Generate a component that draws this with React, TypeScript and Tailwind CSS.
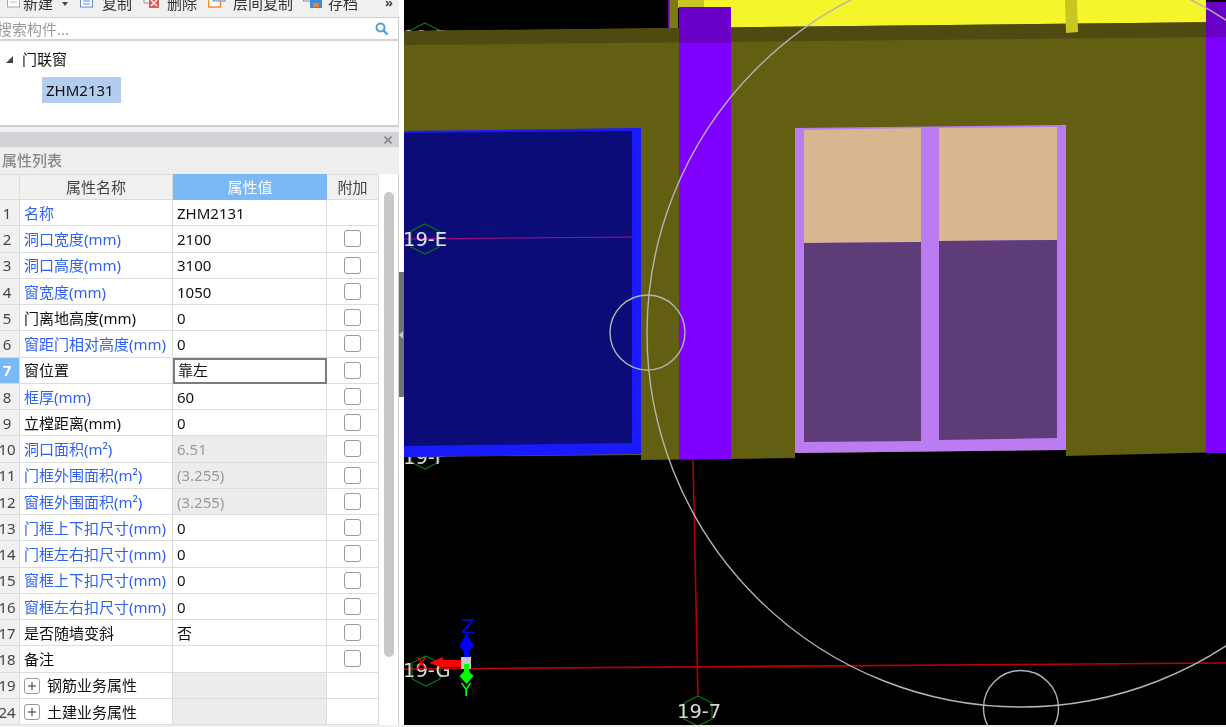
import React from "react";

const cjk = { fontFamily: '"Noto Sans", "Noto Sans CJK SC", sans-serif' };

const rows = [
    { no: 1, name: "名称", value: "ZHM2131", blue: true, noCheck: true },
    { no: 2, name: "洞口宽度(mm)", value: "2100", blue: true },
    { no: 3, name: "洞口高度(mm)", value: "3100", blue: true },
    { no: 4, name: "窗宽度(mm)", value: "1050", blue: true },
    { no: 5, name: "门离地高度(mm)", value: "0" },
    { no: 6, name: "窗距门相对高度(mm)", value: "0", blue: true },
    { no: 7, name: "窗位置", value: "靠左", active: true },
    { no: 8, name: "框厚(mm)", value: "60", blue: true },
    { no: 9, name: "立樘距离(mm)", value: "0" },
    { no: 10, name: "洞口面积(m²)", value: "6.51", blue: true, grey: true },
    { no: 11, name: "门框外围面积(m²)", value: "(3.255)", blue: true, grey: true },
    { no: 12, name: "窗框外围面积(m²)", value: "(3.255)", blue: true, grey: true },
    { no: 13, name: "门框上下扣尺寸(mm)", value: "0", blue: true },
    { no: 14, name: "门框左右扣尺寸(mm)", value: "0", blue: true },
    { no: 15, name: "窗框上下扣尺寸(mm)", value: "0", blue: true },
    { no: 16, name: "窗框左右扣尺寸(mm)", value: "0", blue: true },
    { no: 17, name: "是否随墙变斜", value: "否" },
    { no: 18, name: "备注", value: "" },
    { no: 19, name: "钢筋业务属性", value: "", group: true },
    { no: 24, name: "土建业务属性", value: "", group: true },
];

const Toolbar = () => (
    <div className="h-[18px] shrink-0 bg-[#f0f0f0] border-b border-[#cfcfcf] overflow-hidden relative text-[15px] leading-[20px] text-[#333]">
        <div className="flex items-start -mt-[7px]">
            <svg width="14" height="20" className="ml-[7px] -mt-[1px]"><rect x="0.5" y="0" width="12" height="15" fill="#fff" stroke="#aaa" /><path d="M3 7h7M3 10h7" stroke="#bbb" /></svg>
            <span className="ml-[2px]">新建</span>
            <svg width="6" height="4" className="ml-[9px] mt-[9px]"><path d="M0 0h6L3 4z" fill="#444" /></svg>
            <svg width="15" height="20" className="ml-[11px] -mt-[1px]"><rect x="1.5" y="0" width="12" height="15" fill="#fff" stroke="#5a8fc8" /><path d="M4 6h7M4 9h7M4 12h7" stroke="#5a8fc8" /></svg>
            <span className="ml-[8px]">复制</span>
            <svg width="18" height="20" className="ml-[11px] -mt-[1px]"><path d="M1 0v11h7" fill="none" stroke="#999" /><rect x="6" y="6" width="10" height="10" fill="#e05a50" /><path d="M8 8l6 6M14 8l-6 6" stroke="#fff" strokeWidth="1.4" /></svg>
            <span className="ml-[6px]">删除</span>
            <svg width="18" height="20" className="ml-[11px] -mt-[1px]"><rect x="0.5" y="3" width="12" height="12" fill="#fff" stroke="#ef8a30" strokeWidth="1.5" /><rect x="5" y="0" width="12" height="9" fill="#d8e8f8" stroke="#5a8fc8" /></svg>
            <span className="ml-[7px]">层间复制</span>
            <svg width="20" height="20" className="ml-[10px] -mt-[1px]"><rect x="0.5" y="2" width="9" height="7" fill="#fff" stroke="#888" /><rect x="7" y="4" width="12" height="12" fill="#3f8ad8" /><rect x="10" y="4" width="6" height="4" fill="#fff" /><rect x="10" y="11" width="6" height="4" fill="#f08030" /></svg>
            <span className="ml-[5px]">存档</span>
        </div>
        <span className="absolute left-[385px] top-[-8px] text-[13px] font-bold text-[#444]">»</span>
    </div>
);

const SearchBar = () => (
    <div className="h-[23px] shrink-0 bg-white border-b-2 border-[#d4d4d4] border-r border-r-[#cfcfcf] flex items-center justify-between pr-[9px] overflow-hidden">
        <span className="-ml-[3px] pt-[1px] text-[15px] text-[#9a9a9a]">搜索构件...</span>
        <svg width="14" height="14" viewBox="0 0 14 14">
            <circle cx="5.5" cy="5.5" r="4" fill="none" stroke="#4c9fd4" strokeWidth="2" />
            <path d="M8.5 8.5l4 4" stroke="#4c9fd4" strokeWidth="2.4" />
        </svg>
    </div>
);

const Tree = () => (
    <div className="h-[86px] shrink-0 bg-white border-b-2 border-[#cfcfcf] border-r border-r-[#cfcfcf] text-[15px] text-[#111]">
        <div className="flex items-center h-[24px] mt-[6px] pl-[6px]">
            <svg width="7" height="7"><path d="M7 0v7H0z" fill="#444" /></svg>
            <span className="ml-[9px]">门联窗</span>
        </div>
        <div className="ml-[42px] mt-[6px] w-[79px] h-[26px] bg-[#b3cdee] flex items-center pl-[4px]">ZHM2131</div>
    </div>
);

const Checkbox = () => <div className="w-[17px] h-[17px] rounded-[3px] border border-[#9a9a9a] bg-white" />;

const PlusBox = () => (
    <div className="w-[16px] h-[16px] rounded-[3px] border border-[#9a9a9a] bg-white flex items-center justify-center shrink-0">
        <svg width="8" height="8"><path d="M4 0v8M0 4h8" stroke="#333" /></svg>
    </div>
);

const PropertyTable = () => (
    <div className="flex-1 flex bg-white border-r border-[#cfcfcf] min-h-0 relative text-[15px]">
        <div className="w-[379px] shrink-0 grid grid-cols-[20px_153px_154px_52px] auto-rows-[26.25px] grid-rows-[26px]">
            <div className="bg-[#f0f0f0] border-r border-b border-t border-[#dcdcdc]" />
            <div className="bg-[#f0f0f0] border-r border-b border-t border-[#dcdcdc] flex items-center justify-center text-[#444]">属性名称</div>
            <div className="bg-[#7ab8f6] text-white flex items-center justify-center">属性值</div>
            <div className="bg-[#f0f0f0] border-b border-t border-r border-[#dcdcdc] flex items-center justify-center text-[#444]">附加</div>
            {rows.map((row) => (
                <React.Fragment key={row.no}>
                    <div className={`flex items-center justify-center pt-[1px] pr-[5px] border-r border-b border-[#dcdcdc] ${row.active ? "bg-[#7ab8f6] text-white font-bold" : "bg-[#f0f0f0] text-[#444]"}`}>
                        {row.no}
                    </div>
                    <div className={`flex items-center pt-[1px] pl-[4px] border-r border-b border-[#dcdcdc] whitespace-nowrap ${row.blue ? "text-[#2f62f0]" : "text-[#111]"}`}>
                        {row.group && <PlusBox />}
                        <span className={row.group ? "ml-[7px]" : ""}>{row.name}</span>
                    </div>
                    {row.active ? (
                        <div className="flex items-center pl-[3px] border-2 border-[#7c7c7c] text-[#111]">{row.value}</div>
                    ) : (
                        <div className={`flex items-center pt-[1px] pl-[4px] border-r border-b border-[#dcdcdc] ${row.grey || row.group ? "bg-[#ececec] text-[#9a9a9a]" : "text-[#111]"}`}>
                            {row.value}
                        </div>
                    )}
                    <div className="flex items-center justify-center border-r border-b border-[#dcdcdc]">
                        {!row.noCheck && !row.group && <Checkbox />}
                    </div>
                </React.Fragment>
            ))}
        </div>
        <div className="absolute left-[384px] top-[18px] w-[10px] h-[465px] rounded-full bg-[#c8c8c8]" />
    </div>
);

const Hex = ({ cx, cy }: { cx: number; cy: number }) => (
    <polygon
        points={`${cx},${cy - 15} ${cx + 14},${cy - 8} ${cx + 14},${cy + 8} ${cx},${cy + 15} ${cx - 14},${cy + 8} ${cx - 14},${cy - 8}`}
        fill="none"
        stroke="#0a7a0a"
        strokeWidth="1.2"
    />
);

const labelFont = '"DejaVu Sans", sans-serif';

const Scene = () => (
    <svg viewBox="404 0 822 725" width="822" height="725" className="block">
        <rect x="404" y="0" width="822" height="725" fill="#000" />

        <Hex cx={425} cy={38} />
        <text x="403" y="44" fill="#d8d8d8" fontSize="19.5" fontFamily={labelFont}>19-D</text>
        <Hex cx={425} cy={454} />
        <text x="403" y="464" fill="#d8d8d8" fontSize="19.5" fontFamily={labelFont}>19-F</text>

        {/* upper floor */}
        <polygon points="704,0 1206,0 1206,24 704,29" fill="#f5f52c" />
        <polygon points="678,0 704,0 704,8 678,8" fill="#c8c622" />
        <rect x="668" y="0" width="10" height="30" fill="#7c7a12" />
        <rect x="668" y="0" width="1.5" height="29" fill="#7000c0" />

        {/* wall */}
        <polygon points="404,31 1226,22 1226,452 1066,456 1066,450 795,453 795,458 641,460 641,455 404,457" fill="#625e12" />
        <polygon points="404,31 1226,22 1226,37 404,45" fill="#4f4a10" />
        <polygon points="1065,0 1077,0 1078,32 1066,33" fill="#c8c622" />

        {/* door */}
        <polygon points="404,131 641,128 641,454 404,457" fill="#1a1aff" />
        <polygon points="404,133 632,131 632,443 404,446" fill="#0c0c78" />

        {/* window */}
        <polygon points="795,128 1066,125 1066,450 795,453" fill="#bb7cf2" />
        <polygon points="804,130 921,128 921,242 804,243" fill="#d8b690" />
        <polygon points="939,128 1057,127 1057,240 939,241" fill="#d8b690" />
        <polygon points="804,243 921,242 921,441 804,442" fill="#5e3c78" />
        <polygon points="939,241 1057,240 1057,438 939,440" fill="#5e3c78" />

        {/* columns */}
        <rect x="679" y="7" width="52" height="452" fill="#8000ff" />
        <polygon points="679,7 730,7 731,43 679,43" fill="#6a00c8" />
        <rect x="1206" y="2" width="20" height="451" fill="#8000ff" />
        <polygon points="1206,2 1226,2 1226,37 1206,38" fill="#6a00c8" />

        {/* grid lines */}
        <line x1="404" y1="239" x2="632" y2="237" stroke="#a0108a" />
        <line x1="693" y1="460" x2="698" y2="697" stroke="#b00000" strokeWidth="1.6" />
        <line x1="404" y1="669" x2="1226" y2="663" stroke="#c00000" strokeWidth="1.6" />

        <Hex cx={425} cy={239} />
        <text x="403" y="246" fill="#e4e4e4" fontSize="19.5" fontFamily={labelFont}>19-E</text>
        <Hex cx={426} cy={671} />
        <text x="403" y="677" fill="#d8d8d8" fontSize="19.5" fontFamily={labelFont}>19-G</text>
        <Hex cx={698} cy={711} />
        <text x="677" y="718" fill="#d8d8d8" fontSize="19.5" fontFamily={labelFont}>19-7</text>

        {/* snap circles */}
        <circle cx="1021" cy="333" r="374" fill="none" stroke="#b4b4b4" strokeWidth="1.4" />
        <circle cx="647.5" cy="332.5" r="37.5" fill="none" stroke="#b4b4b4" strokeWidth="1.4" />
        <circle cx="1021" cy="708" r="37.5" fill="none" stroke="#b4b4b4" strokeWidth="1.4" />

        {/* axis gizmo */}
        <rect x="464" y="648" width="5" height="11" fill="#0000ff" />
        <polygon points="466.5,633 473.5,646 469,652 464,652 459.5,646" fill="#0000ff" />
        <text x="461" y="633" fill="#0000ff" fontSize="20" fontFamily={labelFont}>Z</text>
        <rect x="443" y="660" width="19" height="7" fill="#ff0000" />
        <polygon points="429,663 443,657 443,668" fill="#ff0000" />
        <text x="416" y="669" fill="#ff0000" fontSize="16" fontFamily={labelFont}>X</text>
        <rect x="461" y="657" width="10" height="12" fill="#c8c8c8" />
        <rect x="464" y="664" width="5" height="8" fill="#00ff00" />
        <polygon points="466.5,669 473.5,676 466.5,684 459.5,676" fill="#00ff00" />
        <text x="461" y="696" fill="#00ff00" fontSize="17" fontFamily={labelFont}>Y</text>
    </svg>
);

export default function App() {
    return (
        <div className="w-[1226px] h-[727px] overflow-hidden bg-[#f0f0f0] flex blur-[0.4px]" style={cjk}>
            <div className="w-[404px] h-[725px] shrink-0 flex bg-white relative">
                <div className="w-[399px] flex flex-col">
                    <Toolbar />
                    <SearchBar />
                    <Tree />
                    <div className="h-[5px] shrink-0 bg-[#f0f0f0]" />
                    <div className="h-[15px] shrink-0 bg-[#d2d3d6] flex items-center justify-end pr-[7px]">
                        <svg width="8" height="8"><path d="M0.5 0.5l7 7M7.5 0.5l-7 7" stroke="#888" strokeWidth="1.6" /></svg>
                    </div>
                    <div className="h-[27px] shrink-0 bg-[#eeeeee] flex items-center pl-[2px] pb-[1px] text-[15px] text-[#8a8a8a] font-medium">属性列表</div>
                    <PropertyTable />
                </div>
                {/* splitter handle */}
                <div className="absolute left-[399px] top-[272px] w-[5px] h-[125px] bg-[#6e757a] flex items-center">
                    <svg width="4" height="8"><path d="M4 0v8L0 4z" fill="#c8c8c8" /></svg>
                </div>
            </div>
            <div className="flex-1 h-[725px]">
                <Scene />
            </div>
        </div>
    );
}
